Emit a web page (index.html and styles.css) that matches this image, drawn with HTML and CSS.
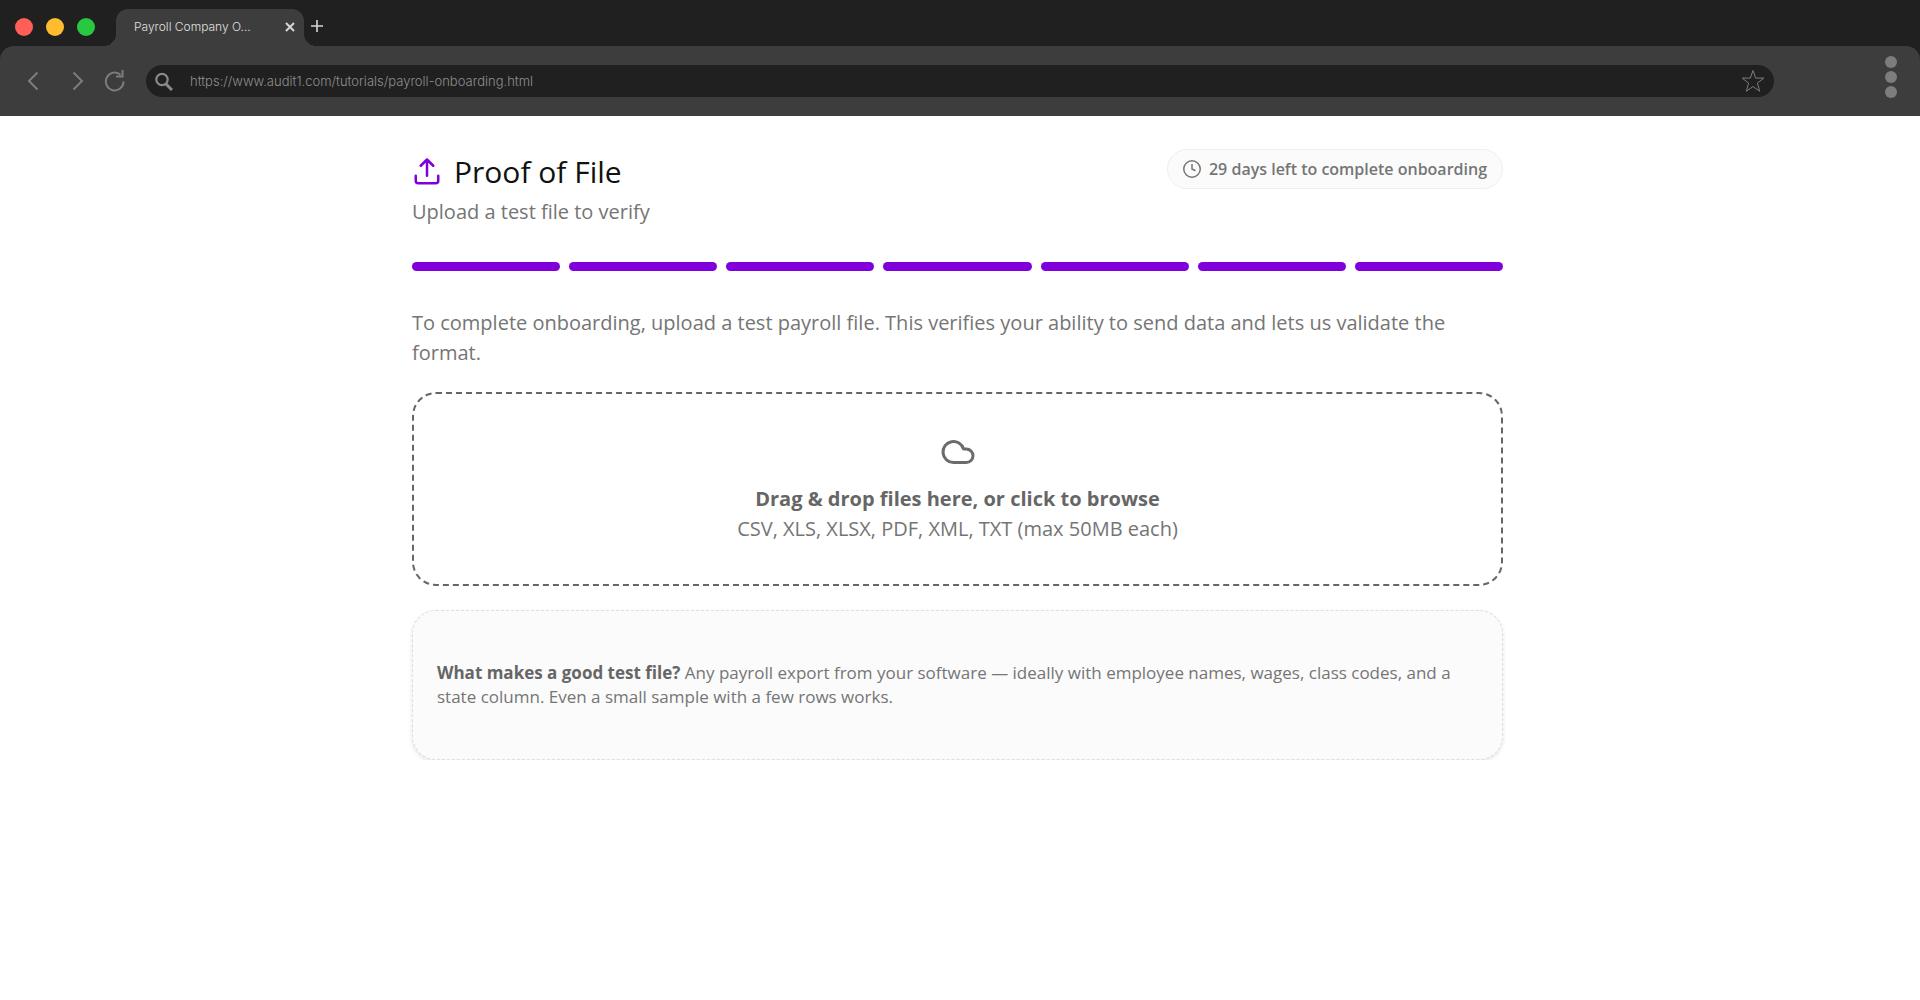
FILE: index.html
```html
<!DOCTYPE html>
<html lang="en">

<head>
    <meta charset="UTF-8">
    <meta name="viewport" content="width=device-width, initial-scale=1.0">
    <title>Payroll Company Onboarding</title>
    <link rel="stylesheet" href="styles.css">
</head>

<body>
    <!-- Browser frame -->
    <header class="browser">
        <div class="tab-bar">
            <div class="lights">
                <span class="light red"></span>
                <span class="light yellow"></span>
                <span class="light green"></span>
            </div>
            <div class="tab">
                <span class="tab-title">Payroll Company O...</span>
                <button class="icon-btn" aria-label="Close tab">
                    <svg width="10" height="10" viewBox="0 0 10 10"><path d="M1 1l8 8M9 1l-8 8" stroke="#d6d6d6" stroke-width="2"/></svg>
                </button>
            </div>
            <button class="icon-btn new-tab" aria-label="New tab">
                <svg width="12" height="12" viewBox="0 0 12 12"><path d="M6 0v12M0 6h12" stroke="#d6d6d6" stroke-width="1.600"/></svg>
            </button>
        </div>
        <div class="toolbar">
            <div class="nav">
                <button class="icon-btn" aria-label="Back">
                    <svg width="12" height="20" viewBox="0 0 12 20"><path d="M10.500 1.500L2 10l8.500 8.500"/></svg>
                </button>
                <button class="icon-btn forward" aria-label="Forward">
                    <svg width="12" height="20" viewBox="0 0 12 20"><path d="M1.500 1.500L10 10l-8.500 8.500"/></svg>
                </button>
                <button class="icon-btn" aria-label="Reload">
                    <svg width="22" height="24" viewBox="0 0 22 24"><path d="M19.500 12.500a8.800 9 0 1 1-3-6.800M18.500 1v6.500h-6.500"/></svg>
                </button>
            </div>
            <div class="address">
                <svg width="18" height="19" viewBox="0 0 18 19" fill="none" stroke="#8a8a8a"><circle cx="7" cy="7.500" r="5.700" stroke-width="2.200"/><path d="M11 12l6 6" stroke-width="3"/></svg>
                <input type="text" aria-label="Address" value="https://www.audit1.com/tutorials/payroll-onboarding.html">
                <button class="icon-btn" aria-label="Bookmark">
                    <svg width="24" height="24" viewBox="0 0 24 24"><path class="star" d="M12 1.500l2.700 7.600h8.100l-6.400 5 2.300 8.100L12 17.600l-6.700 4.600 2.300-8.100-6.400-5h8.100z"/></svg>
                </button>
            </div>
            <button class="icon-btn menu" aria-label="Menu">
                <span></span>
                <span></span>
                <span></span>
            </button>
        </div>
    </header>

    <!-- Main Content -->
    <main>
        <div class="heading">
            <div>
                <h1>
                    <svg width="30" height="30" viewBox="0 0 24 24" fill="none" stroke="#8000db" stroke-width="2" stroke-linecap="round" stroke-linejoin="round"><path d="M21 15v4a2 2 0 0 1-2 2H5a2 2 0 0 1-2-2v-4M17 7l-5-5-5 5M12 2v13"/></svg>
                    Proof of File
                </h1>
                <p class="subtitle">Upload a test file to verify</p>
            </div>
            <div class="badge">
                <svg width="18" height="18" viewBox="0 0 24 24" fill="none" stroke="#757575" stroke-width="2" stroke-linecap="round"><circle cx="12" cy="12" r="11"/><path d="M12 6v6l4 2"/></svg>
                29 days left to complete onboarding
            </div>
        </div>

        <div class="steps">
            <span></span>
            <span></span>
            <span></span>
            <span></span>
            <span></span>
            <span></span>
            <span></span>
        </div>

        <p class="intro">To complete onboarding, upload a test payroll file. This verifies your ability to send data and lets us validate the format.</p>

        <label class="dropzone">
            <input type="file" multiple>
            <svg width="36" height="36" viewBox="0 0 24 24" fill="none" stroke="#6b6b6b" stroke-width="2" stroke-linejoin="round"><path d="M17.500 19H9a7 7 0 1 1 6.710-9h1.790a4.500 4.500 0 1 1 0 9Z"/></svg>
            <strong>Drag &amp; drop files here, or click to browse</strong>
            <span>CSV, XLS, XLSX, PDF, XML, TXT (max 50MB each)</span>
        </label>

        <div class="card">
            <p><strong>What makes a good test file?</strong> Any payroll export from your software — ideally with employee names, wages, class codes, and a state column. Even a small sample with a few rows works.</p>
        </div>
    </main>
</body>

</html>
```
FILE: styles.css
```css
* {
    box-sizing: border-box;
}

body {
    font-family: 'Open Sans', sans-serif;
    margin: 0;
    background-color: #ffffff;
    color: #757575;
}

h1, p {
    margin: 0;
}

/* Browser frame */
.browser {
    background-color: #202020;
    font-family: Inter, sans-serif;
}

.icon-btn {
    display: flex;
    padding: 0;
    border: none;
    background: none;
    cursor: pointer;
}

.tab-bar {
    display: flex;
    align-items: flex-end;
    height: 46px;
    padding-left: 15px;
}

.lights {
    display: flex;
    gap: 13px;
    width: 101px;
    padding-bottom: 10px;
}

.light {
    width: 18px;
    height: 18px;
    border-radius: 50%;
}

.light.red {
    background-color: #ff5f57;
}

.light.yellow {
    background-color: #febc2e;
}

.light.green {
    background-color: #28c840;
}

.tab {
    position: relative;
    display: flex;
    align-items: center;
    justify-content: space-between;
    width: 188px;
    height: 37px;
    padding: 0 9px 2px 18px;
    border-radius: 12px 12px 0 0;
    background-color: #3d3d3d;
}

/* Curved feet where the tab meets the toolbar */
.tab::before, .tab::after {
    content: "";
    position: absolute;
    bottom: 0;
    width: 12px;
    height: 12px;
}

.tab::before {
    right: 100%;
    background: radial-gradient(circle at 0 0, #202020 12px, #3d3d3d 12px);
}

.tab::after {
    left: 100%;
    background: radial-gradient(circle at 100% 0, #202020 12px, #3d3d3d 12px);
}

.tab-title {
    color: #e0e0e0;
    font-size: 12px;
    font-weight: 300;
}

.new-tab {
    padding: 0 7px 14px;
}

.toolbar {
    display: flex;
    align-items: center;
    height: 70px;
    padding: 0 23px 0 27px;
    border-radius: 14px 14px 0 0;
    background-color: #3d3d3d;
}

.nav {
    display: flex;
    align-items: center;
    width: 119px;
}

.nav svg {
    fill: none;
    stroke: #7d7d7d;
    stroke-width: 2;
}

.forward {
    margin: 0 20px 0 33px;
}

.address {
    display: flex;
    flex: 1;
    align-items: center;
    height: 32px;
    margin-right: 111px;
    padding: 0 9px;
    border-radius: 16px;
    background-color: #202020;
}

.address input {
    flex: 1;
    padding: 0 17px;
    border: none;
    outline: none;
    background: none;
    color: #8f8f8f;
    font-family: inherit;
    font-size: 13px;
    font-weight: 300;
}

.star {
    fill: none;
    stroke: #7d7d7d;
}

.menu {
    flex-direction: column;
    gap: 3px;
    margin-bottom: 8px;
}

.menu span {
    width: 12px;
    height: 12px;
    border-radius: 50%;
    background-color: #7d7d7d;
}

/* Onboarding step */
main {
    width: 1096px;
    max-width: 100%;
    margin: 0 auto;
    padding: 33px 5px 0 0;
}

.heading {
    display: flex;
    align-items: flex-start;
    justify-content: space-between;
}

h1 {
    display: flex;
    align-items: center;
    gap: 12px;
    color: #111111;
    font-size: 30px;
    font-weight: 400;
    line-height: 46px;
}

.subtitle, .intro {
    font-size: 20px;
    line-height: 30px;
}

.subtitle {
    margin-top: 2px;
}

.badge {
    display: flex;
    align-items: center;
    gap: 8px;
    height: 40px;
    padding: 0 15px;
    border: 1px solid #eeeeee;
    border-radius: 20px;
    background-color: #fbfbfb;
    font-size: 16px;
    font-weight: 600;
}

.steps {
    display: flex;
    gap: 9px;
    margin: 35px 0 37px;
}

.steps span {
    flex: 1;
    height: 9px;
    border-radius: 5px;
    background-color: #8000db;
}

.dropzone {
    display: flex;
    flex-direction: column;
    align-items: center;
    margin: 24px 0;
    padding: 40px 24px;
    border: 2px dashed #666666;
    border-radius: 24px;
    font-size: 20px;
    line-height: 30px;
    cursor: pointer;
}

.dropzone input {
    position: absolute;
    opacity: 0;
    width: 1px;
    height: 1px;
}

.dropzone svg {
    margin-bottom: 14px;
}

strong {
    color: #666666;
    font-weight: 700;
}

.card {
    padding: 50px 24px;
    border: 1px dashed #dedede;
    border-radius: 24px;
    background-color: #fbfbfb;
    box-shadow: 0 2px 4px rgba(0, 0, 0, 0.1);
    font-size: 17px;
    line-height: 24px;
}
```
